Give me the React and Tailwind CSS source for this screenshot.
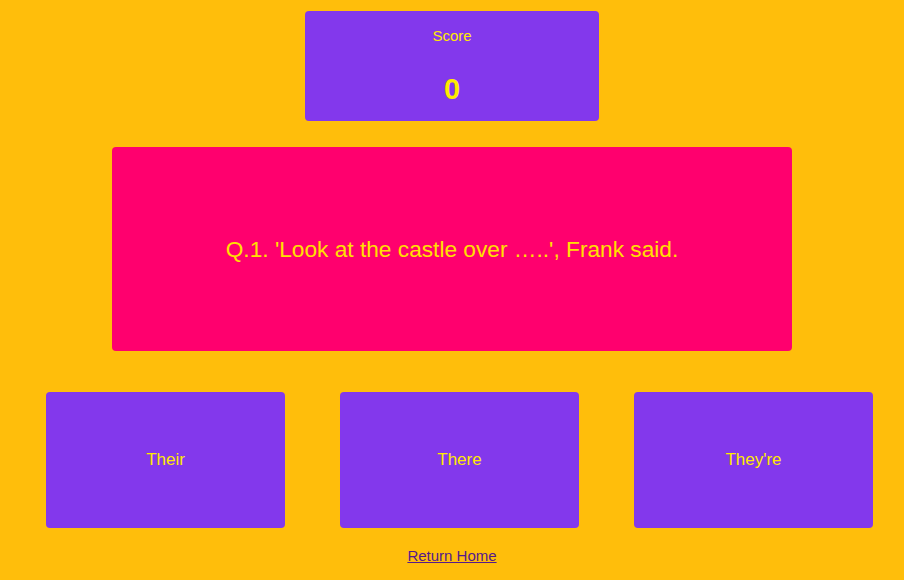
export default function App() {
  const answers = ["Their", "There", "They're"];

  return (
    <div className="w-full h-[580px] bg-[#ffbe0b] flex flex-col items-center font-['Liberation_Sans',Arial,sans-serif] overflow-hidden">
      {/* Score */}
      <div className="mt-[11px] w-[294px] h-[110px] rounded bg-[#8338ec] flex flex-col items-center text-[#ffea00]">
        <div className="mt-[16px] text-[15px] leading-[18px]">Score</div>
        <div className="mt-[28px] text-[29px] leading-[32px] font-bold">0</div>
      </div>

      {/* Question */}
      <div className="mt-[26px] w-[680px] h-[204px] rounded bg-[#ff006e] flex items-center justify-center text-[#ffe100] text-[22.7px]">
        Q.1. 'Look at the castle over …..', Frank said.
      </div>

      {/* Answers */}
      <div className="mt-[41px] w-full pl-[46px] flex gap-[55px]">
        {answers.map((a) => (
          <button
            key={a}
            className="w-[239px] h-[136px] rounded bg-[#8338ec] flex items-center justify-center text-[#ffea00] text-[17px]"
          >
            {a}
          </button>
        ))}
      </div>

      <a href="#" className="mt-[19px] text-[15px] leading-[18px] underline text-[#551a8b]">
        Return Home
      </a>
    </div>
  );
}
